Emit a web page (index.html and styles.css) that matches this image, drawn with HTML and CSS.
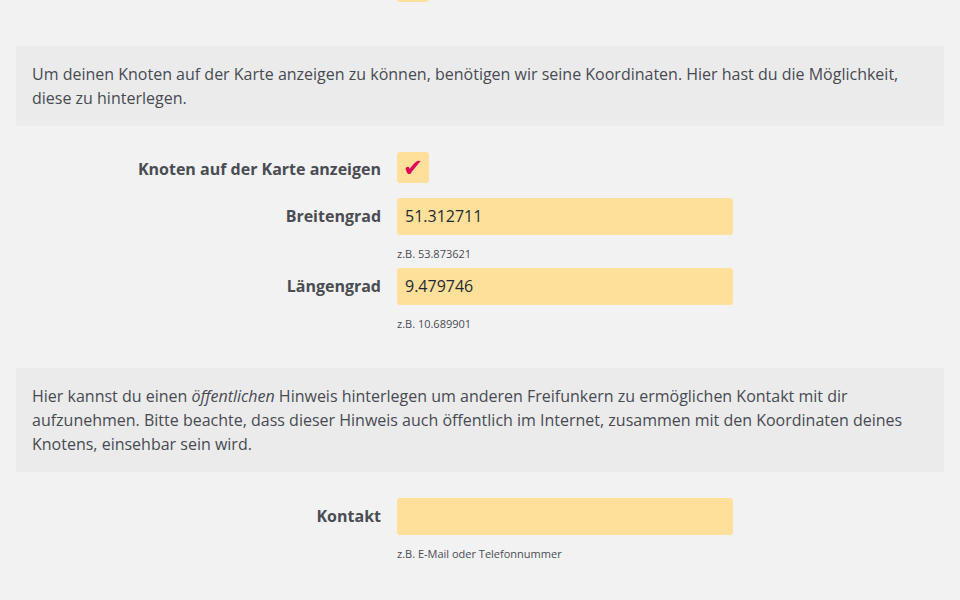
FILE: index.html
```html
<!DOCTYPE html>
<html lang="de">
<head>
<meta charset="utf-8">
<title>Standort</title>
<link rel="stylesheet" href="styles.css">
</head>
<body>
<div class="page">
  <div class="row row-prev">
    <span class="label"></span>
    <div class="field"><span class="checkbox"></span></div>
  </div>

  <div class="note note-first">
    Um deinen Knoten auf der Karte anzeigen zu können, benötigen wir seine Koordinaten. Hier hast du die Möglichkeit, diese zu hinterlegen.
  </div>

  <div class="row row-check">
    <label class="label label-check">Knoten auf der Karte anzeigen</label>
    <div class="field"><span class="checkbox"><span class="tick">✔</span></span></div>
  </div>

  <div class="row row-input row-first-input">
    <label class="label">Breitengrad</label>
    <div class="field">
      <div class="input">51.312711</div>
      <div class="hint">z.B. 53.873621</div>
    </div>
  </div>

  <div class="row row-input row-next">
    <label class="label">Längengrad</label>
    <div class="field">
      <div class="input">9.479746</div>
      <div class="hint">z.B. 10.689901</div>
    </div>
  </div>

  <div class="note note-second">
    Hier kannst du einen <em>öffentlichen</em> Hinweis hinterlegen um anderen Freifunkern zu ermöglichen Kontakt mit dir aufzunehmen. Bitte beachte, dass dieser Hinweis auch öffentlich im Internet, zusammen mit den Koordinaten deines Knotens, einsehbar sein wird.
  </div>

  <div class="row row-input row-contact">
    <label class="label">Kontakt</label>
    <div class="field">
      <div class="input"></div>
      <div class="hint">z.B. E-Mail oder Telefonnummer</div>
    </div>
  </div>
</div>
</body>
</html>
```
FILE: styles.css
```css
html, body {
  margin: 0;
  padding: 0;
  background: #f2f2f2;
}

body {
  font-family: "Open Sans", "DejaVu Sans", sans-serif;
  color: #474a50;
  overflow: hidden;
  height: 600px;
}

.page {
  padding: 0 16px;
  display: flex;
  flex-direction: column;
}

.row {
  display: flex;
  align-items: flex-start;
  gap: 16px;
}

.label {
  width: 365px;
  flex: none;
  text-align: right;
  font-weight: 700;
  font-size: 16px;
  line-height: 37px;
  color: #4a4c53;
}

.label-check {
  line-height: 34px;
}

.field {
  display: flex;
  flex-direction: column;
}

.checkbox {
  display: flex;
  align-items: center;
  justify-content: center;
  width: 32px;
  height: 31px;
  background: #ffe09a;
  border-radius: 3px;
}

.tick {
  font-family: "DejaVu Sans", sans-serif;
  color: #e0045c;
  font-size: 24px;
  line-height: 1;
  margin-top: 1px;
}

.row-prev {
  margin-top: -29px;
}

.note {
  background: #ebebeb;
  padding: 16px;
  font-size: 16px;
  line-height: 24px;
  color: #474a52;
}

.note em {
  font-style: italic;
}

.note-first {
  margin-top: 44px;
}

.row-check {
  margin-top: 26px;
}

.input {
  width: 320px;
  height: 37px;
  padding: 0 8px;
  background: #ffe09a;
  border-radius: 3px;
  font-size: 16px;
  line-height: 37px;
  color: #1e2a36;
}

.hint {
  margin-top: 12px;
  font-size: 11px;
  line-height: 14px;
  color: #4a4c53;
}

.row-first-input {
  margin-top: 12px;
}

.row-next {
  margin-top: 7px;
}

.note-second {
  margin-top: 37px;
}

.row-contact {
  margin-top: 26px;
}
```
